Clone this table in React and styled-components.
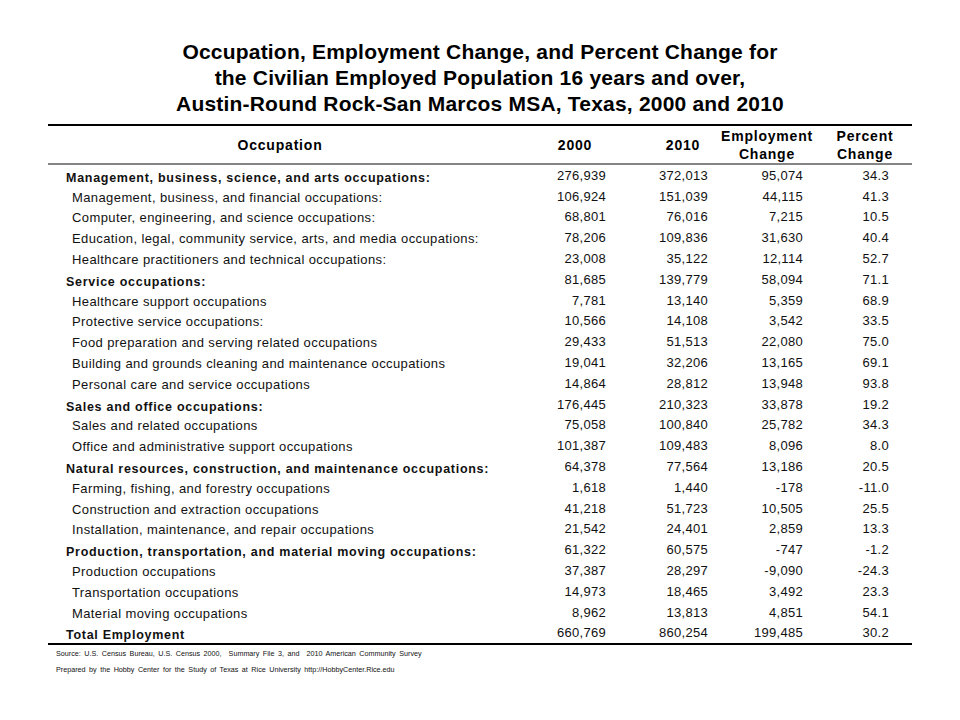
import React from 'react';
import styled, { createGlobalStyle } from 'styled-components';

const GlobalStyle = createGlobalStyle`
  html, body {
    margin: 0;
    padding: 0;
    background: #ffffff;
  }
  body {
    font-family: "Liberation Sans", Arial, sans-serif;
    color: #000;
  }
`;

const COLUMNS = '464px 126px 84px 90px 100px';

const Page = styled.div`
  width: 960px;
  height: 720px;
  padding: 39px 48px 0;
  box-sizing: border-box;
`;

const Title = styled.h1`
  margin: 0 0 7px;
  font-size: 21px;
  line-height: 26px;
  font-weight: bold;
  letter-spacing: 0.2px;
  text-align: center;
  color: #000;
`;

const Table = styled.div`
  width: 864px;
  border-top: 2px solid #000;
  border-bottom: 2px solid #000;
`;

const HeaderRow = styled.div`
  display: grid;
  grid-template-columns: ${COLUMNS};
  height: 37px;
  border-bottom: 2px solid #858585;
`;

const HeadCell = styled.div`
  display: flex;
  flex-direction: column;
  align-items: center;
  justify-content: center;
  min-width: 0;
  font-size: 14px;
  line-height: 18px;
  font-weight: bold;
  letter-spacing: 0.8px;
  white-space: nowrap;
  padding-left: ${({ $shift }) => $shift || 0}px;
`;

const Row = styled.div`
  display: grid;
  grid-template-columns: ${COLUMNS};
  height: 20.8px;
  align-items: center;
`;

const LabelCell = styled.div`
  padding-left: ${({ $group }) => ($group ? '18px' : '24px')};
  padding-top: ${({ $group }) => ($group ? '5px' : '2px')};
  font-size: ${({ $group }) => ($group ? '12.5px' : '13px')};
  font-weight: ${({ $group }) => ($group ? 'bold' : 'normal')};
  letter-spacing: ${({ $group }) => ($group ? '0.72px' : '0.4px')};
  color: #111;
  white-space: nowrap;
`;

const NumCell = styled.div`
  text-align: right;
  padding-right: ${({ $pad }) => $pad}px;
  font-size: 13px;
  letter-spacing: 0.3px;
  color: #111;
`;

const Footer = styled.div`
  padding: 4px 0 0 8px;
`;

const Note = styled.p`
  margin: 0 0 7px;
  font-size: 7.2px;
  line-height: 9px;
  word-spacing: 1.5px;
  white-space: pre;
  color: #111;
`;

const PADS = [32, 14, 9, 23];

const rows = [
  ['Management, business, science, and arts occupations:', true, '276,939', '372,013', '95,074', '34.3'],
  ['Management, business, and financial occupations:', false, '106,924', '151,039', '44,115', '41.3'],
  ['Computer, engineering, and science occupations:', false, '68,801', '76,016', '7,215', '10.5'],
  ['Education, legal, community service, arts, and media occupations:', false, '78,206', '109,836', '31,630', '40.4'],
  ['Healthcare practitioners and technical occupations:', false, '23,008', '35,122', '12,114', '52.7'],
  ['Service occupations:', true, '81,685', '139,779', '58,094', '71.1'],
  ['Healthcare support occupations', false, '7,781', '13,140', '5,359', '68.9'],
  ['Protective service occupations:', false, '10,566', '14,108', '3,542', '33.5'],
  ['Food preparation and serving related occupations', false, '29,433', '51,513', '22,080', '75.0'],
  ['Building and grounds cleaning and maintenance occupations', false, '19,041', '32,206', '13,165', '69.1'],
  ['Personal care and service occupations', false, '14,864', '28,812', '13,948', '93.8'],
  ['Sales and office occupations:', true, '176,445', '210,323', '33,878', '19.2'],
  ['Sales and related occupations', false, '75,058', '100,840', '25,782', '34.3'],
  ['Office and administrative support occupations', false, '101,387', '109,483', '8,096', '8.0'],
  ['Natural resources, construction, and maintenance occupations:', true, '64,378', '77,564', '13,186', '20.5'],
  ['Farming, fishing, and forestry occupations', false, '1,618', '1,440', '-178', '-11.0'],
  ['Construction and extraction occupations', false, '41,218', '51,723', '10,505', '25.5'],
  ['Installation, maintenance, and repair occupations', false, '21,542', '24,401', '2,859', '13.3'],
  ['Production, transportation, and material moving occupations:', true, '61,322', '60,575', '-747', '-1.2'],
  ['Production occupations', false, '37,387', '28,297', '-9,090', '-24.3'],
  ['Transportation occupations', false, '14,973', '18,465', '3,492', '23.3'],
  ['Material moving occupations', false, '8,962', '13,813', '4,851', '54.1'],
  ['Total Employment', true, '660,769', '860,254', '199,485', '30.2'],
];

export default function App() {
  return (
    <Page>
      <GlobalStyle />
      <Title>
        Occupation, Employment Change, and Percent Change for
        <br />
        the Civilian Employed Population 16 years and over,
        <br />
        Austin-Round Rock-San Marcos MSA, Texas, 2000 and 2010
      </Title>
      <Table>
        <HeaderRow>
          <HeadCell>Occupation</HeadCell>
          <HeadCell>2000</HeadCell>
          <HeadCell $shift={6}>2010</HeadCell>
          <HeadCell>
            <span>Employment</span>
            <span>Change</span>
          </HeadCell>
          <HeadCell $shift={6}>
            <span>Percent</span>
            <span>Change</span>
          </HeadCell>
        </HeaderRow>
        {rows.map(([label, group, ...nums]) => (
          <Row key={label}>
            <LabelCell $group={group}>{label}</LabelCell>
            {nums.map((n, i) => (
              <NumCell key={i} $pad={PADS[i]}>
                {n}
              </NumCell>
            ))}
          </Row>
        ))}
      </Table>
      <Footer>
        <Note>
          {'Source: U.S. Census Bureau, U.S. Census 2000,  Summary File 3, and  2010 American Community Survey'}
        </Note>
        <Note>
          {'Prepared by the Hobby Center for the Study of Texas at Rice University http://HobbyCenter.Rice.edu'}
        </Note>
      </Footer>
    </Page>
  );
}
